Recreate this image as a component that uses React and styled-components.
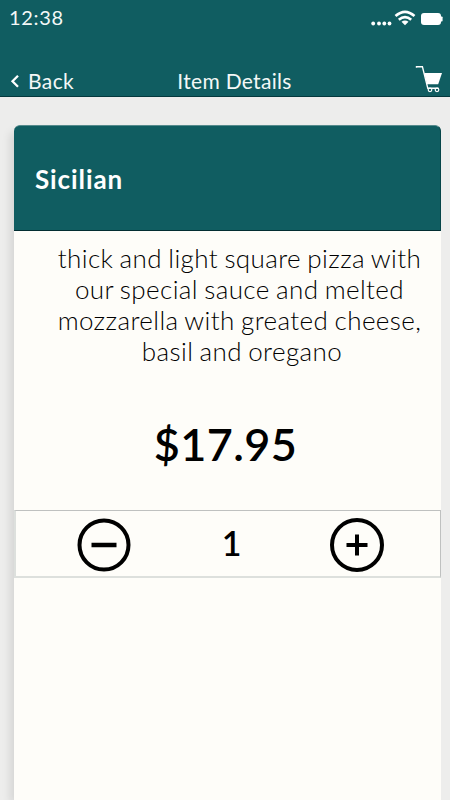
import React from "react";
import styled, { createGlobalStyle } from "styled-components";

const GlobalStyle = createGlobalStyle`
  * { box-sizing: border-box; }
  body { margin: 0; background: #ededec; font-family: Lato, sans-serif; overflow: hidden; }
`;

const Screen = styled.div`
  width: 450px;
  height: 800px;
  display: flex;
  flex-direction: column;
  overflow: hidden;
  background: #ededec;
`;

const Header = styled.header`
  height: 97px;
  flex: none;
  display: flex;
  flex-direction: column;
  justify-content: space-between;
  background: #105d61;
  border-bottom: 1px solid #04393e;
  color: #f4f8f7;
`;

const StatusBar = styled.div`
  height: 36px;
  display: flex;
  align-items: center;
  justify-content: space-between;
  padding: 0 7px 0 9px;
`;

const Clock = styled.span`
  font-size: 20px;
  line-height: 24px;
  letter-spacing: 0.7px;
  padding-bottom: 2px;
`;

const StatusIcons = styled.svg`
  width: 74px;
  height: 20px;
  display: block;
`;

const NavBar = styled.nav`
  height: 32px;
  display: grid;
  grid-template-columns: 120px 1fr 104px;
  align-items: center;
  padding: 0 7px 0 10px;
`;

const BackButton = styled.button`
  display: flex;
  align-items: center;
  gap: 8px;
  padding: 2px 0 0;
  border: 0;
  background: none;
  color: inherit;
  font: 400 21px/26px Lato, sans-serif;
  letter-spacing: 0.4px;
`;

const NavTitle = styled.h1`
  margin: 0;
  padding-top: 2px;
  text-align: center;
  white-space: nowrap;
  font: 400 21px/26px Lato, sans-serif;
  letter-spacing: 0.3px;
`;

const CartButton = styled.button`
  justify-self: end;
  display: flex;
  padding: 0;
  border: 0;
  background: none;
`;

const Card = styled.main`
  flex: 1;
  margin: 28px 9px 0 14px;
  display: flex;
  flex-direction: column;
  background: #fefdf9;
  border-radius: 6px 6px 0 0;
  box-shadow: -6px 5px 8px -2px rgba(0, 0, 0, 0.1);
`;

const CardHeader = styled.div`
  height: 106px;
  display: flex;
  align-items: center;
  padding: 2px 0 0 21px;
  background: #105d61;
  border: 1px solid #074549;
  border-top-color: #558a8c;
  border-left: 0;
  border-bottom-color: #032d32;
  border-radius: 6px 6px 0 0;
`;

const ItemName = styled.h2`
  margin: 0;
  color: #fff;
  font-size: 26px;
  line-height: 32px;
  font-weight: 700;
  letter-spacing: 0.9px;
`;

const Description = styled.p`
  margin: 12px 0 0 24px;
  color: #000;
  text-align: center;
  white-space: nowrap;
  font-size: 26px;
  line-height: 31px;
  font-weight: 300;
  letter-spacing: 0.4px;
  word-spacing: -1.2px;
`;

const DescriptionLine = styled.span`
  display: block;

  &:last-child {
    padding-left: 5px;
  }
`;

const Price = styled.div`
  margin-top: 47px;
  padding-right: 4px;
  text-align: center;
  color: #000;
  font-size: 45px;
  line-height: 60px;
  font-weight: 600;
  letter-spacing: 0.4px;
`;

const QuantityRow = styled.div`
  height: 68px;
  margin-top: 36px;
  display: grid;
  grid-template-columns: 176px 1fr 166px;
  align-items: center;
  justify-items: center;
  border: 1px solid #bfc1c0;
  border-bottom: 2px solid #dde0dd;
  border-left: 2px solid #dde0dd;
`;

const RoundButton = styled.button`
  display: flex;
  padding: 3px 0 0;
  border: 0;
  background: none;
`;

const Quantity = styled.span`
  color: #000;
  font-size: 34px;
  line-height: 40px;
  font-weight: 600;
  padding: 0 3px 1px 0;
`;

const lines = [
  "thick and light square pizza with",
  "our special sauce and melted",
  "mozzarella with greated cheese,",
  "basil and oregano",
];

function CircleIcon({ plus }) {
  return (
    <svg width="56" height="56" viewBox="0 0 56 56" fill="none" stroke="#000">
      <circle cx="28" cy="28" r={plus ? 25 : 24.5} strokeWidth="4" />
      {plus ? (
        <path d="M17.5 28H38.5M28 17.5V38.5" strokeWidth="4" />
      ) : (
        <path d="M15.5 28H40.5" strokeWidth="4.5" />
      )}
    </svg>
  );
}

export default function App() {
  return (
    <>
      <GlobalStyle />
      <Screen>
        <Header>
          <StatusBar>
            <Clock>12:38</Clock>
            <StatusIcons viewBox="369 8 74 20" fill="#fff">
              <circle cx="373.2" cy="23.5" r="1.9" />
              <circle cx="379" cy="23.5" r="1.9" />
              <circle cx="384.3" cy="23.5" r="1.9" />
              <circle cx="389.5" cy="23.5" r="1.9" />
              <g fill="none" stroke="#fff" strokeWidth="2.7">
                <path d="M395.5 16.1Q405 7.6 414.5 16.1" />
                <path d="M398.8 19.8Q405 14.6 411.2 19.8" />
              </g>
              <path d="M401.5 21.7Q405 19.2 408.5 21.7L405 25.2Z" />
              <rect x="421" y="13" width="20" height="12" rx="3" />
              <path d="M441 16.5h.8q.8 0 .8.8v3.4q0 .8-.8.8H441Z" />
            </StatusIcons>
          </StatusBar>
          <NavBar>
            <BackButton>
              <svg width="10" height="14" viewBox="0 0 10 14" fill="none" stroke="#fff" strokeWidth="2.3">
                <path d="M8 1.8L2.5 7.3L8 12.8" />
              </svg>
              Back
            </BackButton>
            <NavTitle>Item Details</NavTitle>
            <CartButton aria-label="Cart">
              <svg width="28" height="28" viewBox="415 66 28 28" fill="none" stroke="#fff">
                <path d="M416.5 67.8V66.7H422.4L427.8 88.3H438.5" strokeWidth="1.4" />
                <path d="M424.2 73H442L438.2 84.2H427Z" fill="#fff" stroke="none" />
                <circle cx="430" cy="89.8" r="1.8" strokeWidth="1.2" />
                <circle cx="437" cy="89.8" r="1.8" strokeWidth="1.2" />
              </svg>
            </CartButton>
          </NavBar>
        </Header>
        <Card>
          <CardHeader>
            <ItemName>Sicilian</ItemName>
          </CardHeader>
          <Description>
            {lines.map((line) => (
              <DescriptionLine key={line}>{line}</DescriptionLine>
            ))}
          </Description>
          <Price>$17.95</Price>
          <QuantityRow>
            <RoundButton aria-label="Decrease">
              <CircleIcon />
            </RoundButton>
            <Quantity>1</Quantity>
            <RoundButton aria-label="Increase">
              <CircleIcon plus />
            </RoundButton>
          </QuantityRow>
        </Card>
      </Screen>
    </>
  );
}
